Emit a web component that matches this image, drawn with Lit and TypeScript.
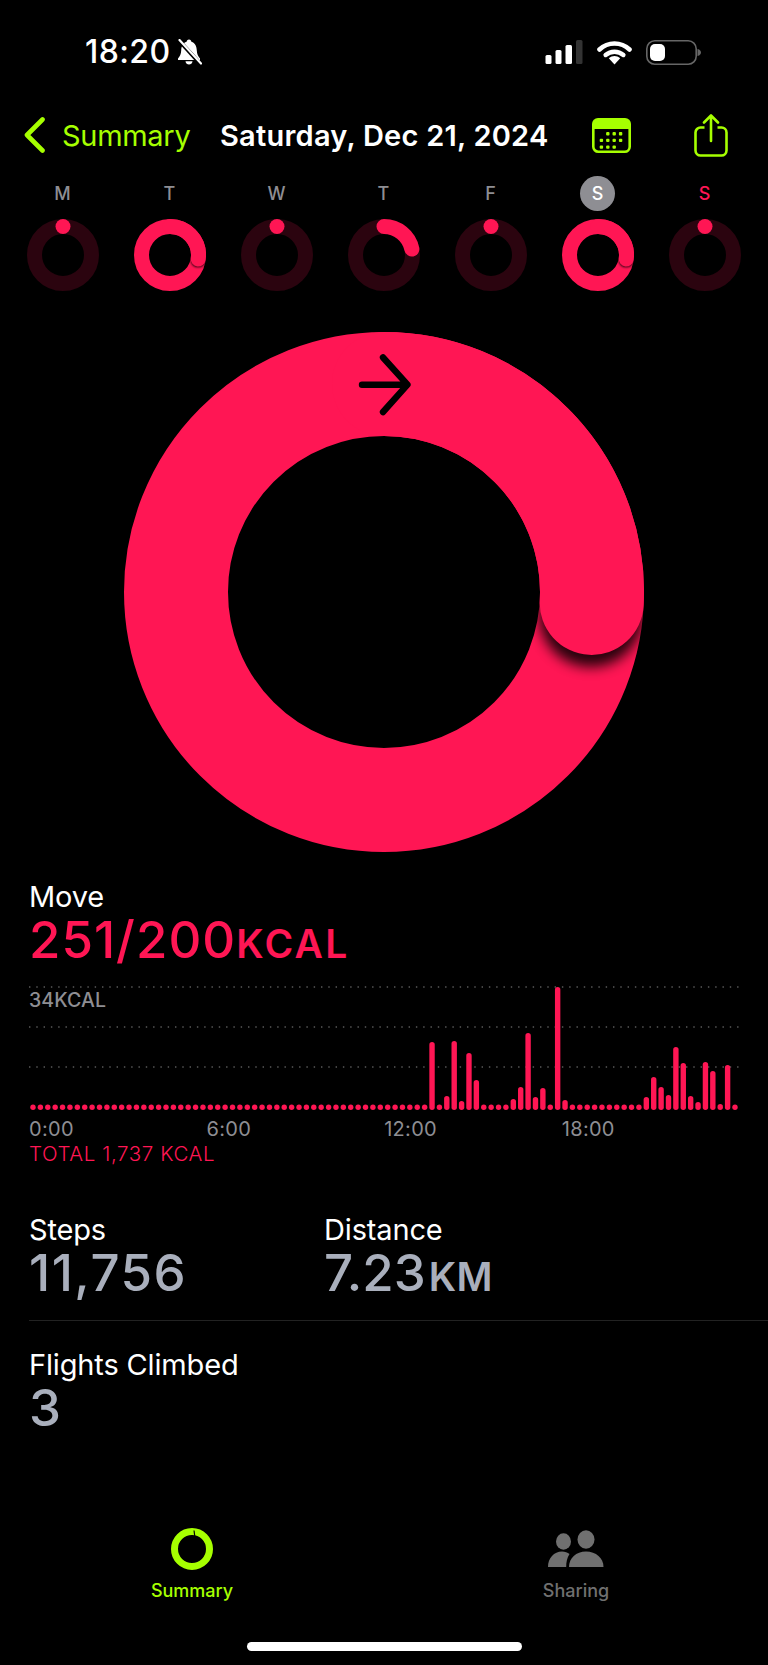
import { html, css, svg, LitElement } from 'lit';
import { customElement } from 'lit/decorators.js';

const PINK = '#ff1654';
const TRACK = '#2b040f';

// 15 minute buckets, only the taller ones are listed, everything else is a dot
const MOVE_BARS: Record<number, number> = {
  54: 68, 56: 14, 57: 69, 58: 9, 59: 57, 60: 30,
  65: 11, 66: 23, 67: 77, 68: 13, 69: 22, 71: 123, 72: 10,
  83: 13, 84: 33, 85: 23, 86: 15, 87: 63, 88: 47, 89: 14, 90: 8,
  91: 48, 92: 39, 93: 6, 94: 45,
};

const WEEK = [
  { day: 'M', deg: 0, over: false },
  { day: 'T', deg: 98, over: true },
  { day: 'W', deg: 0, over: false },
  { day: 'T', deg: 78, over: false },
  { day: 'F', deg: 0, over: false },
  { day: 'S', deg: 98, over: true, today: true },
  { day: 'S', deg: 0, over: false, sunday: true },
];

function point(c: number, r: number, deg: number): [number, number] {
  const t = (deg * Math.PI) / 180;
  return [c + r * Math.sin(t), c - r * Math.cos(t)];
}

// activity ring: dim track, arc from 12 o'clock, shadow under the head when it laps
function ring(size: number, width: number, deg: number, over: boolean, id: string) {
  const c = size / 2;
  const r = c - width / 2;
  const [sx, sy] = point(c, r, 0);
  const [ex, ey] = point(c, r, deg);
  const [hx, hy] = point(c, r, deg + width * 0.018 + 0.6);
  return svg`
    <svg class="ring" width=${size} height=${size} viewBox="0 0 ${size} ${size}">
      <filter id=${id} x="-60%" y="-60%" width="220%" height="220%">
        <feGaussianBlur stdDeviation=${width * 0.06} />
      </filter>
      <circle cx=${c} cy=${c} r=${r} fill="none" stroke-width=${width} stroke=${over ? PINK : TRACK} />
      ${over
        ? svg`<circle cx=${hx} cy=${hy + width * 0.03} r=${width / 2} fill="#000" opacity="0.85" filter="url(#${id})" />`
        : ''}
      ${deg === 0
        ? svg`<circle cx=${sx} cy=${sy} r=${width / 2} fill=${PINK} />`
        : svg`<path d="M ${sx} ${sy} A ${r} ${r} 0 0 1 ${ex} ${ey}" fill="none"
            stroke=${PINK} stroke-width=${width} stroke-linecap="round" />`}
    </svg>
  `;
}

@customElement('app-root')
export class AppRoot extends LitElement {
  static styles = css`
    :host {
      display: block;
      width: 768px;
      height: 1665px;
      overflow: hidden;
      background: #000;
      color: #fff;
      font-family: 'Inter', 'Liberation Sans', sans-serif;
    }

    svg {
      display: block;
    }

    .status {
      display: flex;
      align-items: center;
      height: 26px;
      padding: 39px 0 0 85px;
    }

    .time {
      font-size: 32px;
      font-weight: 500;
      line-height: 26px;
      letter-spacing: 0.4px;
      width: 92px;
    }

    .status-right {
      display: flex;
      align-items: center;
      margin-left: auto;
      margin-right: 67px;
    }

    .nav {
      display: flex;
      align-items: center;
      height: 50px;
      margin-top: 45px;
      padding-left: 24px;
    }

    .back-label {
      color: #a6ff00;
      font-size: 29px;
      margin-left: 17px;
      width: 158px;
      letter-spacing: -0.3px;
    }

    .title {
      font-size: 29px;
      font-weight: 600;
      letter-spacing: 0.24px;
      width: 372px;
    }

    .week {
      display: grid;
      grid-template-columns: repeat(7, 107px);
      margin: 16px 0 0 9px;
    }

    .day {
      display: flex;
      flex-direction: column;
      align-items: center;
      gap: 8px;
    }

    .day-label {
      width: 35px;
      height: 35px;
      border-radius: 50%;
      display: flex;
      align-items: center;
      justify-content: center;
      color: #8e8e93;
      font-size: 18px;
      font-weight: 500;
    }

    .day-label.today {
      background: #8e8e93;
      color: #fff;
    }

    .day-label.sunday {
      color: #ff1654;
    }

    .hero {
      position: relative;
      width: 520px;
      height: 520px;
      margin: 41px auto 0;
    }

    .hero-arrow {
      position: absolute;
      left: 0;
      top: 0;
    }

    .move {
      margin-top: 29px;
      padding-left: 29px;
    }

    .label {
      font-size: 29px;
      line-height: 32px;
      letter-spacing: -0.15px;
    }

    .big {
      font-size: 51px;
      line-height: 54px;
      font-weight: 500;
    }

    .ls-move {
      letter-spacing: 1px;
    }

    .ls-steps {
      letter-spacing: 1.5px;
    }

    .unit {
      font-size: 39px;
      font-weight: 600;
    }

    .unit.kcal {
      letter-spacing: 2.3px;
    }

    .unit.km {
      margin-left: 3px;
      letter-spacing: 0.5px;
    }

    .pink {
      color: #ff1654;
    }

    .slate {
      color: #a9afbc;
    }

    .chart {
      position: relative;
      width: 711px;
      margin-top: 15px;
    }

    .chart-max {
      position: absolute;
      left: 0;
      top: 2px;
      font-size: 19.5px;
      font-weight: 500;
      letter-spacing: 0.1px;
      color: #8e8e93;
    }

    .axis {
      display: grid;
      grid-template-columns: repeat(4, 177.6px);
      margin-top: 5px;
      color: #8e8e93;
      font-size: 20px;
      letter-spacing: 0.3px;
      line-height: 24px;
    }

    .total {
      color: #ff1654;
      font-size: 20.5px;
      letter-spacing: 0.6px;
      line-height: 26px;
      font-weight: 300;
    }

    .stats {
      display: grid;
      grid-template-columns: 295px 1fr;
      margin-top: 47px;
      padding-left: 29px;
    }

    .divider {
      height: 1px;
      margin: 16px 0 0 29px;
      background: #222;
    }

    .flights {
      margin-top: 28px;
      padding-left: 29px;
    }

    .tabs {
      display: grid;
      grid-template-columns: 1fr 1fr;
      margin-top: 93px;
    }

    .tab {
      display: flex;
      flex-direction: column;
      align-items: center;
      gap: 10px;
      font-size: 18px;
      font-weight: 500;
      line-height: 22px;
      color: #707070;
    }

    .tab.on {
      color: #a6ff00;
    }

    .tab svg {
      height: 42px;
    }

    .home {
      width: 275px;
      height: 9px;
      border-radius: 5px;
      background: #fff;
      margin: 40px auto 0;
    }
  `;

  private renderStatusIcons() {
    return html`
      <svg width="38" height="24" viewBox="0 0 38 24">
        <rect x="0.5" y="15" width="6" height="9" rx="1.5" fill="#fff" />
        <rect x="10.5" y="10" width="6" height="14" rx="1.5" fill="#fff" />
        <rect x="20.5" y="5" width="6.5" height="19" rx="1.5" fill="#fff" />
        <rect x="31" y="0" width="6.5" height="24" rx="1.5" fill="#333" />
      </svg>
      <svg style="margin-left:14px" width="35" height="25" viewBox="0 0 35 25">
        <path d="M2.5 9.5 C11 1.5 24 1.5 32.5 9.5" fill="none" stroke="#fff" stroke-width="4.6" stroke-linecap="round" />
        <path d="M8.6 15 C13.7 10.6 21.3 10.6 26.4 15" fill="none" stroke="#fff" stroke-width="4.4" stroke-linecap="round" />
        <path d="M11.8 18.3 C15.4 15.2 19.6 15.2 23.2 18.3 L17.5 24.5 Z" fill="#fff" />
      </svg>
      <svg style="margin-left:14px" width="55" height="25" viewBox="0 0 55 25">
        <rect x="0.8" y="0.8" width="49.4" height="23.4" rx="8" fill="none" stroke="#666" stroke-width="1.6" />
        <rect x="4" y="4" width="15" height="17" rx="5" fill="#fff" />
        <path d="M51.5 9 C54 9.6 55 11 55 12.5 C55 14 54 15.4 51.5 16 Z" fill="#666" />
      </svg>
    `;
  }

  private renderBell() {
    return html`
      <svg width="25" height="26" viewBox="0 0 25 26">
        <path d="M12 0.5 C13.5 0.5 14.3 1.6 14.4 2.8 C18.2 4 19.6 7.4 19.8 11.5 C20 15.4 21 17 23 19.5 L23 21 L1 21 L1 19.5 C3 17 4 15.4 4.2 11.5 C4.4 7.4 5.8 4 9.6 2.8 C9.7 1.6 10.5 0.5 12 0.5 Z" fill="#fff" />
        <path d="M8.5 22.3 L15.5 22.3 C15.2 24.4 13.8 25.6 12 25.6 C10.2 25.6 8.8 24.4 8.5 22.3 Z" fill="#fff" />
        <path d="M2 1.5 L23.5 25" stroke="#000" stroke-width="4" />
        <path d="M2.5 1 L24 24.5" stroke="#fff" stroke-width="2.2" stroke-linecap="round" />
      </svg>
    `;
  }

  private renderCalendar() {
    const dots = [];
    for (let row = 0; row < 3; row += 1) {
      for (let col = 0; col < 4; col += 1) {
        if ((row === 0 && col === 0) || (row === 2 && col === 3)) continue;
        dots.push(svg`<rect x=${7.7 + col * 6.4} y=${14 + row * 6.7} width="3.4" height="3.4" rx="1" fill="#a6ff00" />`);
      }
    }
    return html`
      <svg width="39" height="35" viewBox="0 0 39 35">
        <path d="M6 0 H33 A6 6 0 0 1 39 6 V11 H0 V6 A6 6 0 0 1 6 0 Z" fill="#a6ff00" />
        <rect x="1.3" y="6" width="36.4" height="27.7" rx="5" fill="none" stroke="#a6ff00" stroke-width="2.6" />
        ${dots}
      </svg>
    `;
  }

  private renderShare() {
    return html`
      <svg width="34" height="43" viewBox="0 0 34 43">
        <path d="M10.5 13.5 H6.5 A5 5 0 0 0 1.5 18.5 V36.5 A5 5 0 0 0 6.5 41.5 H27.5 A5 5 0 0 0 32.5 36.5 V18.5 A5 5 0 0 0 27.5 13.5 H23.5"
          fill="none" stroke="#a6ff00" stroke-width="2.6" />
        <path d="M17 27 V2 M10 8.5 L17 1.5 L24 8.5" fill="none" stroke="#a6ff00" stroke-width="2.6" stroke-linecap="round" stroke-linejoin="round" />
      </svg>
    `;
  }

  private renderChart() {
    const base = 124;
    const step = 702 / 95;
    const bars = [];
    for (let i = 0; i < 96; i += 1) {
      const x = 4 + i * step;
      const h = MOVE_BARS[i] ?? 0;
      bars.push(svg`<line x1=${x} x2=${x} y1=${base - 2.7} y2=${base - Math.max(h, 5.4) + 2.7}
        stroke=${PINK} stroke-width="5.4" stroke-linecap="round" />`);
    }
    return svg`
      <svg width="711" height="126" viewBox="0 0 711 126">
        ${[1, 41, 81].map(
          y => svg`<line x1="0" x2="711" y1=${y} y2=${y} stroke="#5a5a5a" stroke-width="1.4" stroke-dasharray="1.4 5.9" />`,
        )}
        ${bars}
      </svg>
    `;
  }

  render() {
    return html`
      <div class="status">
        <div class="time">18:20</div>
        ${this.renderBell()}
        <div class="status-right">${this.renderStatusIcons()}</div>
      </div>

      <div class="nav">
        <svg width="21" height="36" viewBox="0 0 21 36">
          <path d="M18.5 2.5 L3 18 L18.5 33.5" fill="none" stroke="#a6ff00" stroke-width="4.6" stroke-linecap="round" stroke-linejoin="round" />
        </svg>
        <div class="back-label">Summary</div>
        <div class="title">Saturday, Dec 21, 2024</div>
        ${this.renderCalendar()}
        <div style="margin-left:63px">${this.renderShare()}</div>
      </div>

      <div class="week">
        ${WEEK.map(
          (d, i) => html`
            <div class="day">
              <div class="day-label ${d.today ? 'today' : ''} ${d.sunday ? 'sunday' : ''}">${d.day}</div>
              ${ring(72, 15, d.deg, d.over, `mini-${i}`)}
            </div>
          `,
        )}
      </div>

      <div class="hero">
        ${ring(520, 104, 93, true, 'hero-shadow')}
        <svg class="hero-arrow" width="520" height="520" viewBox="0 0 520 520">
          <path d="M238 52.7 H283 M259 25.5 L283.5 52.7 L259 80" fill="none" stroke="#000" stroke-width="6.4" stroke-linecap="round" stroke-linejoin="round" />
        </svg>
      </div>

      <div class="move">
        <div class="label">Move</div>
        <div class="big pink ls-move">251/200<span class="unit kcal">KCAL</span></div>
        <div class="chart">
          ${this.renderChart()}
          <div class="chart-max">34KCAL</div>
          <div class="axis">
            <span>0:00</span><span>6:00</span><span>12:00</span><span>18:00</span>
          </div>
          <div class="total">TOTAL 1,737 KCAL</div>
        </div>
      </div>

      <div class="stats">
        <div>
          <div class="label">Steps</div>
          <div class="big slate ls-steps">11,756</div>
        </div>
        <div>
          <div class="label">Distance</div>
          <div class="big slate">7.23<span class="unit km">KM</span></div>
        </div>
      </div>
      <div class="divider"></div>
      <div class="flights">
        <div class="label">Flights Climbed</div>
        <div class="big slate">3</div>
      </div>

      <div class="tabs">
        <div class="tab on">
          <svg width="42" height="42" viewBox="0 0 42 42">
            <circle cx="21" cy="21" r="17.5" fill="none" stroke="#a6ff00" stroke-width="7" />
            <path d="M23 2.5 L24 10" stroke="#000" stroke-width="1.2" />
          </svg>
          Summary
        </div>
        <div class="tab">
          <svg width="56" height="42" viewBox="0 0 56 42">
            <ellipse cx="15.5" cy="13.5" rx="7.5" ry="8.3" fill="#707070" />
            <ellipse cx="38" cy="11.5" rx="8.5" ry="9.3" fill="#707070" />
            <path d="M0 39 C0 30 6 23.5 14 23.5 C17 23.5 19.5 24.4 21.5 26 C19 29.5 18.2 34.5 18.2 39 Z" fill="#707070" />
            <path d="M21 39 C21 30 28 23.5 38 23.5 C48 23.5 55.5 30 55.5 39 Z" fill="#707070" />
          </svg>
          Sharing
        </div>
      </div>

      <div class="home"></div>
    `;
  }
}
